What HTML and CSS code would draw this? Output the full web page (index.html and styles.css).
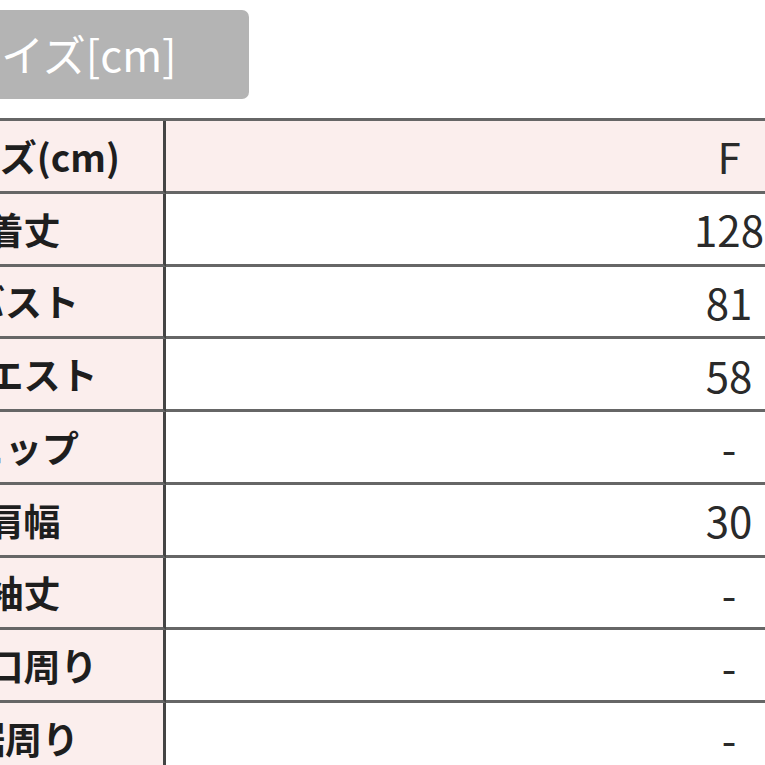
FILE: index.html
```html
<!DOCTYPE html>
<html lang="ja">
<head>
<meta charset="utf-8">
<title>サイズ表</title>
<link rel="stylesheet" href="styles.css">
</head>
<body>
<div class="page">
  <div class="badge"><span class="badge-text">サイズ[cm]</span></div>
  <table class="size-table">
    <colgroup><col class="col-label"><col class="col-value"></colgroup>
    <tr class="head-row"><th class="label">サイズ(cm)</th><td class="value">F</td></tr>
    <tr><th class="label">着丈</th><td class="value">128</td></tr>
    <tr><th class="label">バスト</th><td class="value">81</td></tr>
    <tr><th class="label">ウエスト</th><td class="value">58</td></tr>
    <tr><th class="label">ヒップ</th><td class="value">-</td></tr>
    <tr><th class="label">肩幅</th><td class="value">30</td></tr>
    <tr><th class="label">袖丈</th><td class="value">-</td></tr>
    <tr><th class="label">袖口周り</th><td class="value">-</td></tr>
    <tr><th class="label">裾周り</th><td class="value">-</td></tr>
  </table>
</div>
</body>
</html>
```
FILE: styles.css
```css
html, body {
  margin: 0;
  padding: 0;
  background: #ffffff;
  overflow: hidden;
}
body {
  width: 765px;
  height: 765px;
  font-family: "Noto Sans CJK JP", "Noto Sans", sans-serif;
}
.page {
  display: flex;
  flex-direction: column;
  align-items: flex-start;
  width: 2000px;
}
.badge {
  margin-top: 10px;
  margin-left: -60px;
  width: 309px;
  height: 89px;
  box-sizing: border-box;
  padding-left: 18px;
  background: #b4b4b4;
  border-radius: 7px;
  display: flex;
  align-items: center;
  color: #ffffff;
  font-size: 43px;
  font-weight: 400;
  flex-shrink: 0;
}
.badge-text {
  white-space: nowrap;
  position: relative;
  top: -2px;
}
.size-table {
  margin-top: 19px;
  margin-left: -116px;
  width: 1408px;
  table-layout: fixed;
  border-collapse: separate;
  border-spacing: 0;
  border-top: 3px solid #666666;
  flex-shrink: 0;
}
.col-label {
  width: 282px;
}
.col-value {
  width: 1126px;
}
.size-table th,
.size-table td {
  height: 69.75px;
  padding: 0;
  border-bottom: 3px solid #666666;
  white-space: nowrap;
}
.label {
  background: #fbeeed;
  border-right: 3px solid #444444;
  color: #1e1e1e;
  font-size: 37px;
  font-weight: 700;
  text-align: center;
}
.value {
  color: #2a2a2a;
  font-size: 42px;
  font-weight: 400;
  text-align: center;
  background: #ffffff;
}
.head-row .value {
  background: #fbeeed;
}
```
